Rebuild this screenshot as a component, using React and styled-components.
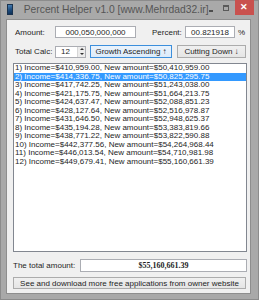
import React from "react";
import styled, { createGlobalStyle } from "styled-components";

const GlobalStyle = createGlobalStyle`
  html, body {
    margin: 0;
    padding: 0;
    background: #a9a9a9;
  }
  * {
    box-sizing: border-box;
  }
`;

const rows = [
  "1) Income=$410,959.00, New amount=$50,410,959.00",
  "2) Income=$414,336.75, New amount=$50,825,295.75",
  "3) Income=$417,742.25, New amount=$51,243,038.00",
  "4) Income=$421,175.75, New amount=$51,664,213.75",
  "5) Income=$424,637.47, New amount=$52,088,851.23",
  "6) Income=$428,127.64, New amount=$52,516,978.87",
  "7) Income=$431,646.50, New amount=$52,948,625.37",
  "8) Income=$435,194.28, New amount=$53,383,819.66",
  "9) Income=$438,771.22, New amount=$53,822,590.88",
  "10) Income=$442,377.56, New amount=$54,264,968.44",
  "11) Income=$446,013.54, New amount=$54,710,981.98",
  "12) Income=$449,679.41, New amount=$55,160,661.39",
];

const Window = styled.div`
  width: 259px;
  height: 300px;
  background: #a9a9a9;
  border: 1px solid #8c8c8c;
  display: flex;
  flex-direction: column;
  font-family: "Liberation Sans", Arial, sans-serif;
`;

const TitleBar = styled.div`
  height: 18px;
  display: flex;
  align-items: flex-start;
  padding-left: 6px;
`;

const AppIcon = styled.div`
  width: 7px;
  height: 11px;
  margin-top: 3px;
  background: linear-gradient(160deg, #4f86b8 0%, #1f4f82 50%, #0e2f55 100%);
  border: 1px solid #1a3350;
`;

const Title = styled.div`
  margin-left: 11px;
  margin-top: 3px;
  font-size: 10.3px;
  line-height: 11px;
  color: #555;
  white-space: nowrap;
`;

const Spacer = styled.div`
  flex: 1;
`;

const MinButton = styled.div`
  width: 6px;
  height: 2px;
  background: #4d4d4d;
  margin-top: 9px;
  margin-right: 10px;
`;

const MaxButton = styled.div`
  width: 7px;
  height: 6px;
  border: 1px solid #5a5a5a;
  border-top-width: 2px;
  margin-top: 4px;
  margin-right: 6px;
`;

const CloseButton = styled.div`
  width: 26px;
  height: 15px;
  margin-top: -1px;
  margin-right: 4px;
  background: #c9514e;
  color: #fff;
  font-size: 9px;
  font-weight: bold;
  line-height: 15px;
  text-align: center;
`;

const Client = styled.div`
  margin: 0 7px 5px 5px;
  flex: 1;
  background: #f0f0f0;
  border: 1px solid #8e8e8e;
  padding: 6px 3px 4px 6px;
  display: flex;
  flex-direction: column;
  font-size: 8px;
  color: #1e1e1e;
`;

const Row = styled.div`
  display: flex;
  align-items: center;
  height: ${(p) => p.$h || 12}px;
  margin-top: ${(p) => p.$mt || 0}px;
  padding-left: ${(p) => p.$pl || 0}px;
`;

const Label = styled.div`
  width: ${(p) => p.$w}px;
  margin-left: ${(p) => p.$ml || 0}px;
  white-space: nowrap;
`;

const TextBox = styled.div`
  width: ${(p) => p.$w}px;
  height: ${(p) => p.$h || 12}px;
  background: #fff;
  border: 1px solid #abadb3;
  display: flex;
  align-items: center;
  justify-content: center;
  font-weight: ${(p) => (p.$bold ? "bold" : "normal")};
  font-family: ${(p) => (p.$bold ? '"Liberation Serif", "Times New Roman", serif' : "inherit")};
  font-size: 8px;
  color: #1e1e1e;
`;

const Percent = styled.div`
  margin-left: 3px;
`;

const Spinner = styled.div`
  width: 31px;
  height: 12px;
  background: #fff;
  border: 1px solid #abadb3;
  display: flex;
  align-items: center;
  padding-left: 5px;
`;

const SpinValue = styled.div`
  flex: 1;
`;

const SpinArrows = styled.div`
  width: 8px;
  height: 10px;
  display: flex;
  flex-direction: column;
  border-left: 1px solid #d6d6d6;
  background: #ececec;
`;

const SpinArrow = styled.div`
  flex: 1;
  display: flex;
  align-items: center;
  justify-content: center;
  &::after {
    content: "";
    border-left: 2px solid transparent;
    border-right: 2px solid transparent;
    ${(p) => (p.$up ? "border-bottom: 2px solid #333;" : "border-top: 2px solid #333;")}
  }
`;

const Button = styled.div`
  width: ${(p) => p.$w}px;
  height: ${(p) => p.$h || 13}px;
  margin-left: ${(p) => p.$ml || 0}px;
  border: 1px solid ${(p) => (p.$focus ? "#3c8fdc" : "#acacac")};
  background: ${(p) =>
    p.$focus
      ? "linear-gradient(#eaf3fc, #dcebfa)"
      : "linear-gradient(#f0f0f0, #e5e5e5)"};
  display: flex;
  align-items: center;
  justify-content: center;
  white-space: nowrap;
  font-size: 8px;
  color: #1e1e1e;
`;

const ListBox = styled.div`
  margin-top: 5px;
  height: 189px;
  width: 234px;
  background: #fff;
  border: 1px solid #828790;
  overflow: hidden;
`;

const ListItem = styled.div`
  height: 8.55px;
  line-height: 8.55px;
  padding-left: 1px;
  white-space: nowrap;
  background: ${(p) => (p.$selected ? "#3399ff" : "transparent")};
  color: ${(p) => (p.$selected ? "#fff" : "#1e1e1e")};
`;

export default function App() {
  return (
    <>
      <GlobalStyle />
      <Window>
        <TitleBar>
          <AppIcon />
          <Title>Percent Helper v1.0 [www.Mehrdad32.ir]</Title>
          <Spacer />
          <MinButton />
          <MaxButton />
          <CloseButton>✕</CloseButton>
        </TitleBar>
        <Client>
          <Row $h={12} $pl={2}>
            <Label $w={40}>Amount:</Label>
            <TextBox $w={81}>000,050,000,000</TextBox>
            <Label $w={33} $ml={16}>Percent:</Label>
            <TextBox $w={50}>00.821918</TextBox>
            <Percent>%</Percent>
          </Row>
          <Row $h={13} $mt={7} $pl={2}>
            <Label $w={40}>Total Calc:</Label>
            <Spinner>
              <SpinValue>12</SpinValue>
              <SpinArrows>
                <SpinArrow $up />
                <SpinArrow />
              </SpinArrows>
            </Spinner>
            <Button $w={82} $ml={4} $focus>Growth Ascending ↑</Button>
            <Button $w={69} $ml={5}>Cutting Down ↓</Button>
          </Row>
          <ListBox>
            {rows.map((r, i) => (
              <ListItem key={i} $selected={i === 1}>
                {r}
              </ListItem>
            ))}
          </ListBox>
          <Row $h={13} $mt={7}>
            <Label $w={67}>The total amount:</Label>
            <TextBox $w={167} $h={13} $bold>
              $55,160,661.39
            </TextBox>
          </Row>
          <Row $h={12} $mt={5}>
            <Button $w={233} $h={12}>
              See and download more free applications from owner website
            </Button>
          </Row>
        </Client>
      </Window>
    </>
  );
}
